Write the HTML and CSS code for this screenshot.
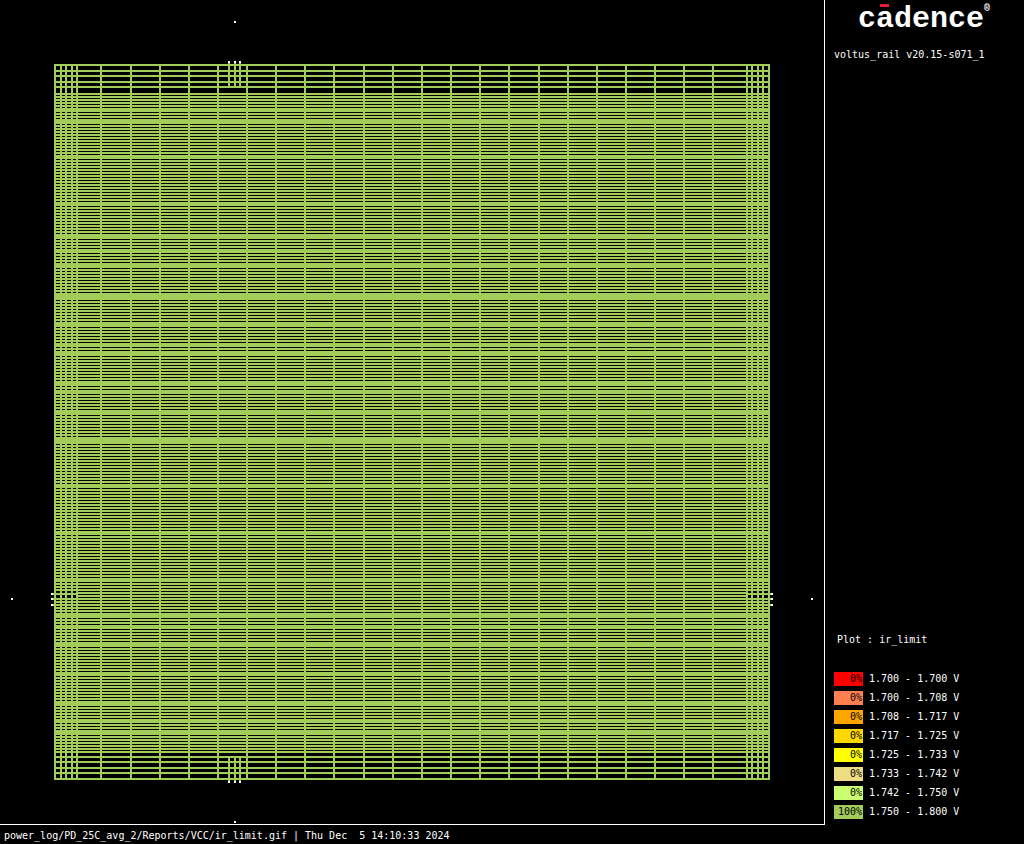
FILE: index.html
```html
<!DOCTYPE html>
<html lang="en">
<head>
<meta charset="utf-8">
<title>ir_limit</title>
<link rel="stylesheet" href="styles.css">
</head>
<body>
<div class="report">
  <main class="plot">
    <svg class="grid" viewBox="0 0 824 824" role="img" aria-label="ir_limit rail plot">
      <rect class="metal" x="54" y="64" width="716" height="716"/>
      <g id="gaps"></g>
      <g id="straps" class="metal"></g>
      <g id="pins"></g>
    </svg>
  </main>
  <aside class="side">
    <header class="head">
      <div class="logo">c<span class="macron">a</span>dence<sup class="reg">®</sup></div>
      <p class="version">voltus_rail v20.15-s071_1</p>
    </header>
    <section class="legend">
      <h2 class="title">Plot : ir_limit</h2>
      <table class="bands">
        <tr><td class="swatch red">0%</td><td class="range">1.700 - 1.700 V</td></tr>
        <tr><td class="swatch coral">0%</td><td class="range">1.700 - 1.708 V</td></tr>
        <tr><td class="swatch orange">0%</td><td class="range">1.708 - 1.717 V</td></tr>
        <tr><td class="swatch gold">0%</td><td class="range">1.717 - 1.725 V</td></tr>
        <tr><td class="swatch yellow">0%</td><td class="range">1.725 - 1.733 V</td></tr>
        <tr><td class="swatch sand">0%</td><td class="range">1.733 - 1.742 V</td></tr>
        <tr><td class="swatch lime">0%</td><td class="range">1.742 - 1.750 V</td></tr>
        <tr><td class="swatch green">100%</td><td class="range">1.750 - 1.800 V</td></tr>
      </table>
    </section>
  </aside>
  <footer class="status">power_log/PD_25C_avg_2/Reports/VCC/ir_limit.gif | Thu Dec  5 14:10:33 2024</footer>
</div>
<script src="plot.js"></script>
</body>
</html>
```

FILE: styles.css
```css
body {
  margin: 0;
  background: #000;
  color: #fff;
  font: 10px/14px "DejaVu Sans Mono", "Liberation Mono", monospace;
}

.report {
  display: grid;
  grid-template-columns: minmax(0, 1fr) 199px;
  grid-template-rows: 1fr auto;
  min-height: 100vh;
}

.plot {
  border-right: 1px solid #fff;
  border-bottom: 1px solid #fff;
}

.grid {
  display: block;
  width: 100%;
  shape-rendering: crispEdges;
}

.metal { fill: #a2cd5a; }
.gap { fill: #000; }
.pin { fill: #fff; }

.side {
  grid-row: 1 / 3;
  grid-column: 2;
  display: flex;
  flex-direction: column;
  justify-content: space-between;
  padding: 0 0 20px 9px;
}

.logo {
  padding-left: 24px;
  font-family: "Liberation Mono", monospace;
  font-size: 30px;
  font-weight: bold;
  line-height: 38px;
  white-space: nowrap;
}

.macron { position: relative; }

.macron::before {
  content: "";
  position: absolute;
  left: 4px;
  top: 2px;
  width: 9px;
  height: 3px;
  background: #e31b3c;
}

.reg {
  font-size: 10px;
  line-height: 10px;
  vertical-align: 16px;
}

.version { margin: 10px 0 0; }

.title {
  margin: 0 0 20px 3px;
  font-size: 10px;
  font-weight: normal;
}

.bands {
  border-spacing: 0 5px;
  line-height: 14px;
}

.bands td { padding: 0; }

.bands .swatch {
  box-sizing: border-box;
  width: 29px;
  padding-right: 1px;
  color: #000;
  text-align: right;
}

.bands .range { padding-left: 6px; }

.red { background: #ff0000; }
.coral { background: #ff7f50; }
.orange { background: #ffa500; }
.gold { background: #ffd700; }
.yellow { background: #ffff00; }
.sand { background: #eedc82; }
.lime { background: #caff70; }
.green { background: #a2cd5a; }

.status {
  padding: 4px 4px 1px;
  white-space: pre;
}
```

FILE: plot.js
```js
const NS = "http://www.w3.org/2000/svg";

function box(parent, cls, x, y, w, h) {
  const r = document.createElementNS(NS, "rect");
  r.setAttribute("class", cls);
  r.setAttribute("x", x);
  r.setAttribute("y", y);
  r.setAttribute("width", w);
  r.setAttribute("height", h);
  parent.appendChild(r);
}

const gaps = document.getElementById("gaps");
const straps = document.getElementById("straps");
const pins = document.getElementById("pins");

// Wide openings between the ring rails: [top, height]
[[66, 4], [72, 3], [77, 4], [83, 3], [88, 5],
 [753, 3], [758, 3], [763, 4], [769, 3], [774, 4]]
  .forEach(([y, h]) => box(gaps, "gap", 56, y, 712, h));

// Runs of one-unit openings between cell rows, three units apart: [first, last]
[[95, 107], [112, 118], [124, 154], [159, 201], [206, 233], [239, 248],
 [253, 262], [268, 292], [300, 321], [327, 342], [347, 350], [356, 380],
 [386, 389], [394, 409], [415, 436], [444, 483], [488, 530], [535, 577],
 [582, 612], [618, 624], [629, 641], [647, 671], [676, 700], [706, 718],
 [723, 729], [735, 750]]
  .forEach(([first, last]) => {
    for (let y = first; y <= last; y += 3) box(gaps, "gap", 56, y, 712, 1);
  });

// Side pin taps
[56, 746].forEach((x) => {
  box(gaps, "gap", x, 591, 22, 2);
  box(gaps, "metal", x, 593, 22, 2);
  box(gaps, "gap", x, 595, 22, 3);
});

// Vertical straps
[60, 65, 71, 76, 100, 130, 159, 188, 217, 246, 275, 304, 333, 363, 392, 421,
 450, 479, 508, 538, 567, 596, 625, 654, 683, 712, 746, 751, 757, 762]
  .forEach((x) => box(straps, "metal", x, 64, 2, 716));

[228, 234, 239].forEach((x) => {
  box(straps, "metal", x, 63, 2, 24);
  box(straps, "metal", x, 756, 2, 25);
  box(pins, "pin", x, 61, 2, 2);
  box(pins, "pin", x, 781, 2, 2);
});

[593, 598, 604].forEach((y) => {
  box(straps, "metal", 53, y, 1, 2);
  box(straps, "metal", 770, y, 1, 2);
  box(pins, "pin", 51, y, 2, 2);
  box(pins, "pin", 771, y, 2, 2);
});

[[234, 21], [234, 821], [11, 598], [811, 598]]
  .forEach(([x, y]) => box(pins, "pin", x, y, 2, 2));
```
